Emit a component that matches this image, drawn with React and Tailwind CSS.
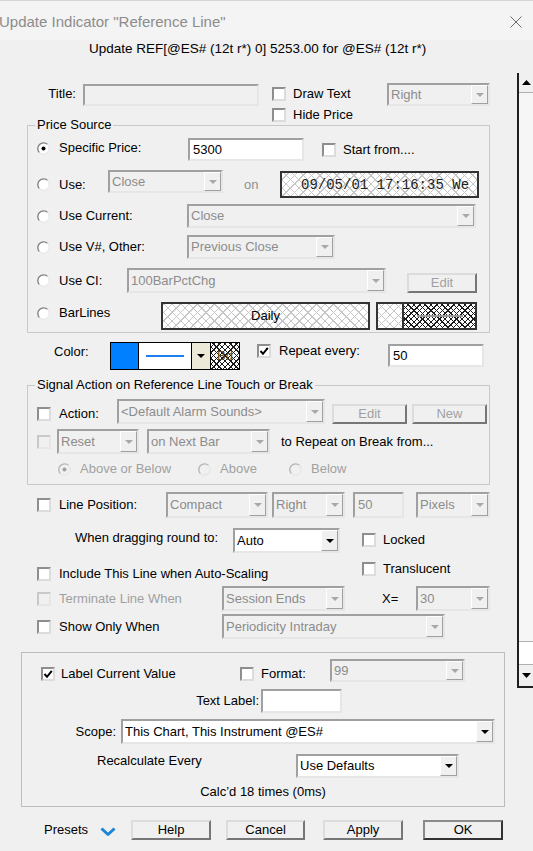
import React from 'react';

const sunken = 'border-2 border-t-[#a0a0a0] border-l-[#a0a0a0] border-r-[#e6e6e6] border-b-[#e6e6e6]';
const hatch =
  'bg-white bg-[image:repeating-linear-gradient(45deg,transparent_0_5px,#c6c6c6_5px_6px),repeating-linear-gradient(-45deg,transparent_0_5px,#c6c6c6_5px_6px)]';
const hatchDark =
  'bg-white bg-[image:repeating-linear-gradient(45deg,transparent_0_3px,#1a1a1a_3px_4px),repeating-linear-gradient(-45deg,transparent_0_3px,#1a1a1a_3px_4px)]';

function Check({ checked, disabled }) {
  return (
    <span
      className={`flex h-[14px] w-[14px] shrink-0 items-center justify-center border-2 ${
        disabled
          ? 'border-t-[#c8c8c8] border-l-[#c8c8c8] border-r-[#e6e6e6] border-b-[#e6e6e6] bg-[#f0f0f0]'
          : 'border-t-[#8e8e8e] border-l-[#8e8e8e] border-r-[#dcdcdc] border-b-[#dcdcdc] bg-white'
      }`}
    >
      {checked && (
        <svg width="10" height="10" viewBox="0 0 10 10">
          <path d="M1.5 5 L4 7.8 L8.8 1.8" fill="none" stroke="#000" strokeWidth="2" />
        </svg>
      )}
    </span>
  );
}

function CheckLabel({ label, checked, disabled, gap = 'gap-[7px]', className = '' }) {
  return (
    <div className={`flex items-center ${gap} ${disabled ? 'text-[#a0a0a0]' : ''} ${className}`}>
      <Check checked={checked} disabled={disabled} />
      <span className="whitespace-nowrap">{label}</span>
    </div>
  );
}

function Radio({ checked, disabled }) {
  return (
    <svg width="13" height="13" viewBox="0 0 13 13" className="shrink-0">
      <circle cx="6.5" cy="6.5" r="5.8" fill={disabled ? '#f0f0f0' : '#fff'} />
      <path d="M10.6 2.4 A5.8 5.8 0 0 0 2.4 10.6" fill="none" stroke={disabled ? '#b4b4b4' : '#7f7f7f'} strokeWidth="1.3" />
      <path d="M2.4 10.6 A5.8 5.8 0 0 0 10.6 2.4" fill="none" stroke="#e2e2e2" strokeWidth="1" />
      {checked && <circle cx="6.5" cy="6.5" r="2" fill={disabled ? '#a0a0a0' : '#000'} />}
    </svg>
  );
}

function RadioLabel({ label, checked, disabled, className = '' }) {
  return (
    <div className={`flex items-center gap-[9px] ${disabled ? 'text-[#a0a0a0]' : ''} ${className}`}>
      <Radio checked={checked} disabled={disabled} />
      <span className="whitespace-nowrap">{label}</span>
    </div>
  );
}

function Combo({ text, enabled, className = '' }) {
  return (
    <div
      className={`flex shrink-0 items-stretch overflow-hidden ${sunken} ${
        enabled ? 'bg-white text-black' : 'bg-[#f0f0f0] text-[#8c8c8c]'
      } ${className}`}
    >
      <div className="flex min-w-0 flex-1 items-center overflow-hidden whitespace-nowrap pl-[2px]">{text}</div>
      <div className="flex w-[17px] shrink-0 items-center justify-center border border-t-white border-l-white border-r-[#a0a0a0] border-b-[#a0a0a0] bg-[#f0f0f0]">
        <svg width="8" height="4" viewBox="0 0 8 4">
          <path d="M0 0H8L4 4Z" fill={enabled ? '#000' : '#a8a8a8'} />
        </svg>
      </div>
    </div>
  );
}

function Btn({ children, disabled, primary, className = '' }) {
  return (
    <div
      className={`flex shrink-0 items-center justify-center border-2 bg-[#f0f0f0] ${
        primary
          ? 'border-t-[#8a8a8a] border-l-[#8a8a8a] border-r-[#333] border-b-[#333]'
          : 'border-t-[#dcdcdc] border-l-[#dcdcdc] border-r-[#767676] border-b-[#767676]'
      } ${disabled ? 'text-[#a0a0a0]' : ''} ${className}`}
    >
      {children}
    </div>
  );
}

function Scrollbar() {
  return (
    <div className="mt-[15px] flex h-[615px] w-[16px] flex-col border-l-2 border-b-2 border-[#1f1f1f]">
      <div className="flex h-[20px] items-center justify-center border-b border-[#b0b0b0] bg-[#f0f0f0]">
        <svg width="9" height="5" viewBox="0 0 9 5">
          <path d="M0 5H9L4.5 0Z" fill="#000" />
        </svg>
      </div>
      <div className="flex-1 bg-[#f6f6f6]" />
      <div className="h-[24px] border-y border-[#b0b0b0] bg-white" />
      <div className="flex h-[21px] items-center justify-center bg-[#f0f0f0]">
        <svg width="9" height="5" viewBox="0 0 9 5">
          <path d="M0 0H9L4.5 5Z" fill="#000" />
        </svg>
      </div>
    </div>
  );
}

export default function App() {
  return (
    <div className="h-[851px] w-[533px] overflow-hidden bg-[#f0f0f0] font-['Liberation_Sans',Arial,sans-serif] text-[13px] leading-[16px] text-black">
      {/* window title */}
      <div className="flex h-[40px] items-center border-t border-[#d4d4d4] bg-[#f4f4f4]">
        <span className="-ml-[1px] pt-[2px] text-[15px] text-[#8c8c8c]">Update Indicator "Reference Line"</span>
        <svg className="ml-auto mr-[11px] mt-[2px]" width="12" height="12" viewBox="0 0 12 12">
          <path d="M0.5 0.5 L11.5 11.5 M11.5 0.5 L0.5 11.5" stroke="#6a6a6a" strokeWidth="1" />
        </svg>
      </div>
      <div className="flex h-[18px] items-center pl-[89px] text-[13.5px]">
        Update REF[@ES# (12t r*) 0] 5253.00 for @ES# (12t r*)
      </div>

      <div className="flex">
        <div className="w-[517px] shrink-0">
          {/* title */}
          <div className="mt-[25px] flex h-[38px] items-start">
            <div className="w-[76px] pt-[3px] text-right">Title:</div>
            <div className={`ml-[7px] mt-[1px] h-[22px] w-[176px] bg-[#f0f0f0] ${sunken}`} />
            <div className="ml-[13px] flex w-[115px] flex-col gap-[5px] pt-[3px]">
              <CheckLabel label="Draw Text" />
              <CheckLabel label="Hide Price" />
            </div>
            <Combo text="Right" className="h-[23px] w-[103px]" />
          </div>

          {/* Price Source */}
          <fieldset className="ml-[27px] w-[463px] border border-[#c9c9c9] pb-[2px]">
            <legend className="ml-[7px] px-[2px] leading-[8px]">Price Source</legend>
            <div className="mt-[8px] flex h-[25px] items-center pl-[9px]">
              <RadioLabel label="Specific Price:" checked className="mb-[3px] w-[151px]" />
              <div className={`flex h-[23px] w-[116px] items-center bg-white pl-[3px] ${sunken}`}>5300</div>
              <CheckLabel label="Start from...." className="ml-[18px]" />
            </div>
            <div className="mt-[8px] flex h-[29px] items-center pl-[9px]">
              <RadioLabel label="Use:" className="w-[71px]" />
              <Combo text="Close" className="h-[23px] w-[115px] self-start" />
              <div className="w-[57px] pl-[21px] text-[#909090]">on</div>
              <div
                className={`flex h-[27px] w-[199px] items-center whitespace-nowrap border-2 border-[#333] pl-[19px] font-['Liberation_Mono',monospace] text-[14px] text-[#222] ${hatch}`}
              >
                09/05/01 17:16:35 We
              </div>
            </div>
            <div className="mt-[5px] flex h-[24px] items-center pl-[9px]">
              <RadioLabel label="Use Current:" className="w-[150px]" />
              <Combo text="Close" className="h-[24px] w-[289px]" />
            </div>
            <div className="mt-[7px] flex h-[24px] items-center pl-[9px]">
              <RadioLabel label="Use V#, Other:" className="w-[150px]" />
              <Combo text="Previous Close" className="h-[24px] w-[148px]" />
            </div>
            <div className="mt-[9px] flex h-[25px] items-center pl-[9px]">
              <RadioLabel label="Use CI:" className="w-[90px]" />
              <Combo text="100BarPctChg" className="h-[25px] w-[259px]" />
              <Btn disabled className="ml-[21px] h-[20px] w-[70px] self-end">Edit</Btn>
            </div>
            <div className="mt-[9px] flex h-[28px] items-center pl-[9px]">
              <RadioLabel label="BarLines" className="mb-[6px] w-[124px]" />
              <div className={`flex h-[28px] w-[209px] items-center justify-center border-2 border-[#333] ${hatch}`}>
                Daily
              </div>
              <div className="ml-[6px] flex h-[28px] w-[101px] border-2 border-[#333]">
                <div className={`w-[26px] border-r-2 border-[#333] ${hatch}`} />
                <div className={`flex flex-1 items-center justify-center ${hatchDark}`}>
                  <div className="h-[2px] w-[46px] bg-[#9a9a9a]" />
                </div>
              </div>
            </div>
          </fieldset>

          {/* color */}
          <div className="mt-[9px] flex h-[28px] items-start">
            <div className="ml-[54px] w-[56px] pt-[2px]">Color:</div>
            <div className="flex h-[28px] w-[130px] border border-black">
              <div className="w-[28px] border-r border-black bg-[#0080ff]" />
              <div className="flex w-[53px] items-center justify-center border-r border-black bg-white">
                <div className="h-[2px] w-[38px] bg-[#1a80f0]" />
              </div>
              <div className="flex w-[19px] items-center justify-center border-r border-black bg-[#ece9d8]">
                <svg width="8" height="4" viewBox="0 0 8 4">
                  <path d="M0 0H8L4 4Z" fill="#000" />
                </svg>
              </div>
              <div className={`flex flex-1 items-center justify-center text-[#5a4a20] ${hatchDark}`}>Bd</div>
            </div>
            <CheckLabel label="Repeat every:" checked gap="gap-[8px]" className="ml-[17px] mt-[1px] w-[131px]" />
            <div className={`mt-[2px] flex h-[23px] w-[96px] items-center bg-white pl-[3px] ${sunken}`}>50</div>
          </div>

          {/* Signal action */}
          <fieldset className="ml-[27px] mt-[11px] w-[463px] border border-[#c9c9c9] pb-[6px]">
            <legend className="ml-[7px] px-[2px] leading-[8px]">Signal Action on Reference Line Touch or Break</legend>
            <div className="mt-[10px] flex h-[25px] items-end pl-[9px]">
              <CheckLabel label="Action:" gap="gap-[8px]" className="mb-[2px] w-[80px]" />
              <Combo text={'<Default Alarm Sounds>'} className="h-[25px] w-[208px]" />
              <Btn disabled className="ml-[7px] h-[20px] w-[75px]">Edit</Btn>
              <Btn disabled className="ml-[5px] h-[20px] w-[75px]">New</Btn>
            </div>
            <div className="mt-[5px] flex h-[25px] items-center pl-[9px]">
              <Check disabled />
              <Combo text="Reset" className="ml-[6px] h-[25px] w-[82px]" />
              <Combo text="on Next Bar" className="ml-[8px] h-[25px] w-[123px]" />
              <span className="ml-[11px] whitespace-nowrap">to Repeat on Break from...</span>
            </div>
            <div className="mt-[6px] flex h-[18px] items-center pl-[30px]">
              <RadioLabel label="Above or Below" checked disabled className="w-[140px]" />
              <RadioLabel label="Above" disabled className="w-[91px]" />
              <RadioLabel label="Below" disabled />
            </div>
          </fieldset>

          {/* line position */}
          <div className="mt-[7px] flex h-[26px] items-center pl-[37px]">
            <CheckLabel label="Line Position:" gap="gap-[8px]" className="w-[129px]" />
            <Combo text="Compact" className="h-[26px] w-[102px]" />
            <Combo text="Right" className="ml-[4px] h-[26px] w-[73px]" />
            <div className={`ml-[8px] flex h-[26px] w-[51px] items-center pl-[3px] text-[#8c8c8c] ${sunken}`}>50</div>
            <Combo text="Pixels" className="ml-[12px] h-[26px] w-[74px]" />
          </div>

          <div className="mt-[10px] flex h-[25px] items-start">
            <div className="ml-[75px] w-[158px] whitespace-nowrap pt-[2px]">When dragging round to:</div>
            <Combo text="Auto" enabled className="h-[25px] w-[107px]" />
            <CheckLabel label="Locked" className="ml-[22px] mt-[4px]" />
          </div>

          <div className="mt-[8px] flex h-[21px] items-start pl-[37px]">
            <CheckLabel label="Include This Line when Auto-Scaling" gap="gap-[8px]" className="mt-[5px] w-[325px]" />
            <CheckLabel label="Translucent" />
          </div>

          <div className="mt-[4px] flex h-[25px] items-center pl-[37px]">
            <CheckLabel label="Terminate Line When" disabled gap="gap-[8px]" className="w-[185px]" />
            <Combo text="Session Ends" className="h-[25px] w-[123px]" />
            <div className="w-[71px] pl-[37px]">X=</div>
            <Combo text="30" className="h-[25px] w-[74px]" />
          </div>

          <div className="mt-[3px] flex h-[25px] items-center pl-[37px]">
            <CheckLabel label="Show Only When" gap="gap-[8px]" className="w-[185px]" />
            <Combo text="Periodicity Intraday" className="h-[25px] w-[223px]" />
          </div>

          {/* label panel */}
          <div className="ml-[21px] mt-[13px] h-[155px] w-[484px] border border-[#bcbcbc]">
            <div className="mt-[6px] flex h-[23px] items-center pl-[19px]">
              <CheckLabel label="Label Current Value" checked gap="gap-[6px]" className="mt-[6px] w-[199px]" />
              <CheckLabel label="Format:" className="mt-[6px] w-[90px]" />
              <Combo text="99" className="h-[23px] w-[135px]" />
            </div>
            <div className="mt-[7px] flex h-[24px] items-center">
              <div className="w-[237px] text-right">Text Label:</div>
              <div className={`ml-[2px] h-[24px] w-[81px] bg-white ${sunken}`} />
            </div>
            <div className="mt-[6px] flex h-[25px] items-center">
              <div className="w-[94px] text-right">Scope:</div>
              <Combo text="This Chart, This Instrument @ES#" enabled className="ml-[5px] h-[25px] w-[374px]" />
            </div>
            <div className="mt-[10px] flex h-[24px] items-start">
              <div className="-mt-[1px] ml-[75px] w-[199px]">Recalculate Every</div>
              <Combo text="Use Defaults" enabled className="h-[24px] w-[163px]" />
            </div>
            <div className="mt-[6px] h-[16px] text-center">Calc’d 18 times (0ms)</div>
          </div>

          {/* buttons */}
          <div className="mt-[13px] flex h-[20px] items-center">
            <span className="ml-[44px]">Presets</span>
            <svg className="ml-[12px] mt-[3px]" width="16" height="10" viewBox="0 0 16 10">
              <path d="M1.5 1.5 L8 7.5 L14.5 1.5" fill="none" stroke="#1a86d8" strokeWidth="3" strokeLinejoin="round" />
            </svg>
            <Btn className="ml-[15px] h-[20px] w-[80px]">Help</Btn>
            <Btn className="ml-[15px] h-[20px] w-[79px]">Cancel</Btn>
            <Btn className="ml-[18px] h-[20px] w-[80px]">Apply</Btn>
            <Btn primary className="ml-[20px] h-[20px] w-[80px]">OK</Btn>
          </div>
        </div>
        <Scrollbar />
      </div>
    </div>
  );
}
